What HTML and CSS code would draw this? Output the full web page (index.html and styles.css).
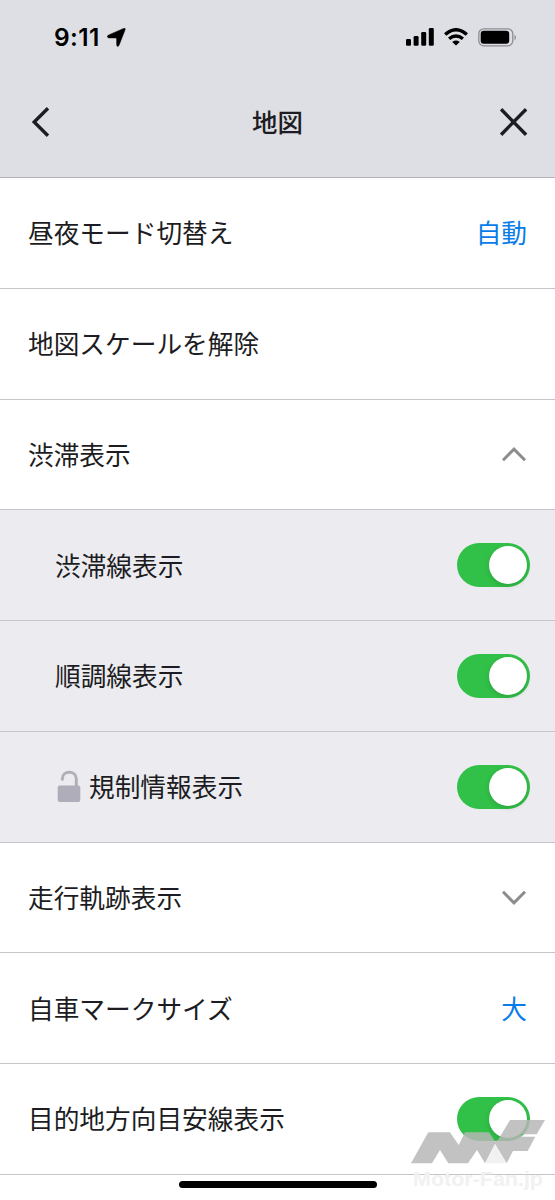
FILE: index.html
```html
<!DOCTYPE html>
<html lang="ja">
<head>
<meta charset="utf-8">
<title>地図</title>
<link rel="stylesheet" href="styles.css">
</head>
<body>
<main class="screen">
  <header class="header">
    <div class="status">
      <div class="time">9:11
        <svg class="location" width="19" height="19" viewBox="0 0 19 19"><path d="M1.2 7.2 16.6.4q2.2-.8 1.5 1.4l-6.1 15.6q-1.5 2.3-2.3-.2l-.1-6.5q0-.7-.7-.7l-7.3-.1Q-.9 8.9 1.2 7.2z" stroke="#000" stroke-width=".5"/></svg>
      </div>
      <div class="indicators">
        <svg width="28" height="18" viewBox="0 0 28 18"><rect x="0" y="11" width="5" height="6.7" rx="1.3"/><rect x="7.6" y="8" width="5" height="9.7" rx="1.3"/><rect x="15.2" y="4" width="5" height="13.7" rx="1.3"/><rect x="22.8" y="0" width="5" height="17.7" rx="1.3"/></svg>
        <svg class="wifi" width="24" height="18" viewBox="0 0 24 18"><g fill="none" stroke="#000" stroke-width="3.4"><path d="M1.2 6.5Q12-3 22.8 6.5"/><path d="M5.1 10.8q6.9-5.8 13.8 0"/></g><path d="M8.2 14q3.8-2.8 7.6 0L12 17.6z"/></svg>
        <svg class="battery" width="39" height="19" viewBox="0 0 39 19"><rect x=".8" y=".8" width="34" height="17" rx="5" fill="none" stroke="#8f8c94" stroke-width="1.3"/><rect x="2.7" y="2.8" width="28.5" height="13" rx="3"/><path d="M36.5 6.4q3 3 0 6z" fill="#8f8c94"/></svg>
      </div>
    </div>
    <div class="nav">
      <svg width="20" height="32" viewBox="0 0 20 32"><path class="nav-line" d="M17 2.3 3.2 16 17 29.7"/></svg>
      <h1 class="title">地図</h1>
      <svg width="30" height="30" viewBox="0 0 30 30"><path class="nav-line" d="m2.1 2.3 25 25.4M27.1 2.3l-25 25.4"/></svg>
    </div>
  </header>
  <section class="list">
    <div class="row"><span class="label">昼夜モード切替え</span><span class="label value">自動</span></div>
    <div class="row"><span class="label">地図スケールを解除</span></div>
    <div class="row"><span class="label">渋滞表示</span><svg class="chevron" width="26" height="16" viewBox="0 0 26 16"><path d="m2 14.2 11-11 11 11"/></svg></div>
    <div class="row sub"><span class="label">渋滞線表示</span><span class="toggle"></span></div>
    <div class="row sub"><span class="label">順調線表示</span><span class="toggle"></span></div>
    <div class="row sub"><span class="locked"><svg class="lock" width="24" height="33" viewBox="0 0 24 33"><path d="M5.3 10.5V9c0-9 14-9 14 0v8" fill="none" stroke="#b0b0b8" stroke-width="3"/><rect x=".7" y="15.5" width="22.6" height="16.5" rx="2"/></svg><span class="label">規制情報表示</span></span><span class="toggle"></span></div>
    <div class="row"><span class="label">走行軌跡表示</span><svg class="chevron" width="26" height="16" viewBox="0 0 26 16"><path d="m2 2.8 11 11 11-11"/></svg></div>
    <div class="row"><span class="label">自車マークサイズ</span><span class="label value">大</span></div>
    <div class="row"><span class="label">目的地方向目安線表示</span><span class="toggle"></span></div>
  </section>
  <div class="home-bar"></div>
  <svg class="watermark" width="145" height="80" viewBox="0 0 145 80">
    <path class="mark" d="M1 43.3 18.3 12.3H40L48.7 25 55 12.3H79L85 21.5 88 20 100 0h35l-8.3 14.3H112l-1.3 2.4h14.6L117.7 31H103l-6.3 12.3L85 24 75 43.3 67 30l-9 13.3H38.3L30 30l-8 13.3z"/>
    <path class="facet" d="m85 24 11.7 19.3H75z"/>
    <text class="brand" x="3" y="66" textLength="130" lengthAdjust="spacingAndGlyphs">Motor-Fan.jp</text>
  </svg>
</main>
</body>
</html>
```
FILE: styles.css
```css
* { box-sizing: border-box; }
body { margin: 0; background: #fff; }
.screen {
  position: relative;
  width: 555px;
  height: 1200px;
  overflow: hidden;
  color: #1c1c22;
  font: 400 25.7px/38px "Noto Sans CJK JP", sans-serif;
}
.header {
  height: 178px;
  background: #dedfe4;
  border-bottom: 1px solid #b4b4b8;
}
.status {
  height: 74px;
  padding: 0 38px 0 54px;
  display: flex;
  align-items: center;
  justify-content: space-between;
}
.time {
  display: flex;
  align-items: center;
  gap: 7px;
  color: #000;
  font: 600 24.5px/30px Inter, sans-serif;
  letter-spacing: .4px;
}
.indicators { display: flex; align-items: center; }
.wifi { margin-left: 10px; }
.battery { margin-left: 10px; }
.nav {
  height: 96px;
  padding: 0 26px 0 31px;
  display: flex;
  align-items: center;
  justify-content: space-between;
}
.title { margin: 0; padding: 0 0 2px 5px; font-size: 25.5px; font-weight: 500; }
.nav-line { fill: none; stroke: #1c1c22; stroke-width: 3.4; }
.row {
  height: 110.75px;
  padding: 0 28px;
  display: flex;
  align-items: center;
  justify-content: space-between;
  border-bottom: 1px solid #c6c6ca;
}
.sub { padding-left: 55px; background: #ebebf0; }
.label { padding-bottom: 1px; }
.value { color: #087ce8; }
.chevron { fill: none; stroke: #8c8c8e; stroke-width: 3; }
.toggle {
  width: 73px;
  height: 44px;
  margin-right: -3px;
  padding: 3px;
  display: flex;
  justify-content: flex-end;
  border-radius: 22px;
  background: #31c048;
}
.toggle::before {
  content: "";
  width: 38px;
  height: 38px;
  border-radius: 50%;
  background: #fff;
  box-shadow: 0 2px 5px #00000025;
}
.locked { display: flex; align-items: center; gap: 8px; }
.lock { margin-left: 2px; fill: #aeadb9; }
.home-bar {
  position: absolute;
  left: 179px;
  top: 1181px;
  width: 198px;
  height: 7px;
  border-radius: 4px;
  background: #000;
}
.watermark { position: absolute; left: 410px; top: 1120px; }
.mark { fill: #b6b6b6; fill-opacity: .84; }
.facet { fill: #eeeeee; fill-opacity: .85; }
.brand {
  fill: #f1f1f1;
  font: 700 20px "Liberation Sans", sans-serif;
}
```
